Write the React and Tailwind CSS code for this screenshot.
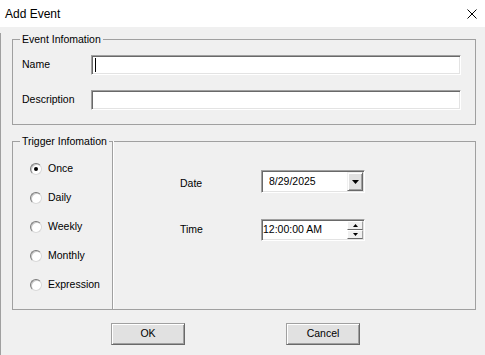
import React from "react";

function Sunken({ className = "", children }) {
  return (
    <div
      className={
        "bg-white border border-t-[#a0a0a0] border-l-[#a0a0a0] border-r-[#ffffff] border-b-[#ffffff] shadow-[inset_1px_1px_0_#696969,inset_-1px_-1px_0_#e3e3e3] " +
        className
      }
    >
      {children}
    </div>
  );
}

function Radio({ checked, label }) {
  return (
    <div className="h-[29px] flex items-center pl-[17px]">
      <div className="w-[12px] h-[12px] rounded-full bg-white border border-t-[#7a7a7a] border-l-[#7a7a7a] border-r-[#d8d8d8] border-b-[#d8d8d8] shadow-[inset_1px_1px_0_#c8c8c8] flex items-center justify-center">
        {checked && <div className="w-[4px] h-[4px] rounded-full bg-black" />}
      </div>
      <span className="ml-[6px]">{label}</span>
    </div>
  );
}

function Button({ children, className = "" }) {
  return (
    <div
      className={
        "w-[74px] h-[22px] bg-[#e1e1e1] border border-t-[#a0a0a0] border-l-[#a0a0a0] border-r-[#696969] border-b-[#696969] shadow-[inset_1px_1px_0_#ffffff,inset_-1px_-1px_0_#a0a0a0] flex items-center justify-center " +
        className
      }
    >
      {children}
    </div>
  );
}

export default function App() {
  return (
    <div className="w-[485px] h-[355px] bg-[#f0f0f0] overflow-hidden text-black font-['Liberation_Sans',Arial,sans-serif] text-[10.5px]">
      {/* Title bar */}
      <div className="h-[27px] bg-white flex items-center justify-between pl-[5px] pr-[8px]">
        <span className="text-[12px]">Add Event</span>
        <svg width="10" height="10" viewBox="0 0 10 10">
          <path d="M0.5 0.5 L9.5 9.5 M9.5 0.5 L0.5 9.5" stroke="#000" strokeWidth="1" />
        </svg>
      </div>

      {/* Body */}
      <div className="h-[328px] border-l border-[#a0a0a0]">
        {/* Event Information */}
        <fieldset className="ml-[11px] mt-[6px] w-[464px] border border-[#a0a0a0] pb-[14px]">
          <legend className="ml-[7px] px-[2px] leading-[12px]">Event Infomation</legend>
          <div className="mt-[10px] h-[20px] flex items-center pl-[9px]">
            <span className="w-[69px]">Name</span>
            <Sunken className="w-[370px] h-[20px] flex items-center">
              <div className="ml-[3px] w-[1px] h-[14px] bg-black" />
            </Sunken>
          </div>
          <div className="mt-[15px] h-[20px] flex items-center pl-[9px]">
            <span className="w-[69px]">Description</span>
            <Sunken className="w-[370px] h-[20px]" />
          </div>
        </fieldset>

        {/* Trigger Information */}
        <fieldset className="ml-[11px] mt-[10px] w-[464px] border border-[#a0a0a0]">
          <legend className="ml-[7px] px-[2px] leading-[12px]">Trigger Infomation</legend>
          <div className="h-[162px] flex items-start">
            <div className="w-[99px] pt-[7px]">
              <Radio checked label="Once" />
              <Radio label="Daily" />
              <Radio label="Weekly" />
              <Radio label="Monthly" />
              <Radio label="Expression" />
            </div>
            <div className="-mt-[6px] h-[168px] flex-1 border-l border-[#a0a0a0] shadow-[inset_1px_0_0_#ffffff] pt-[29px] pl-[67px]">
              <div className="h-[23px] flex items-center">
                <span className="w-[81px] mt-[5px]">Date</span>
                <Sunken className="w-[104px] h-[23px] flex items-center justify-between">
                  <span className="pl-[7px]">8/29/2025</span>
                  <div className="mr-[1px] w-[16px] h-[19px] bg-[#e1e1e1] border border-t-[#f0f0f0] border-l-[#f0f0f0] border-r-[#696969] border-b-[#696969] shadow-[inset_1px_1px_0_#ffffff,inset_-1px_-1px_0_#a0a0a0] flex items-center justify-center">
                    <svg width="7" height="4" viewBox="0 0 7 4">
                      <path d="M0 0 H7 L3.5 4 Z" fill="#000" />
                    </svg>
                  </div>
                </Sunken>
              </div>
              <div className="mt-[26px] h-[22px] flex items-center">
                <span className="w-[81px]">Time</span>
                <Sunken className="w-[104px] h-[22px] flex items-center justify-between">
                  <span className="pl-[1px]">12:00:00 AM</span>
                  <div className="mr-[1px] w-[16px] h-[20px] flex flex-col justify-between py-[1px]">
                    <div className="h-[9px] bg-[#f0f0f0] border border-t-[#ffffff] border-l-[#ffffff] border-r-[#a0a0a0] border-b-[#696969] flex items-center justify-center">
                      <svg width="5" height="3" viewBox="0 0 5 3">
                        <path d="M0 3 H5 L2.5 0 Z" fill="#000" />
                      </svg>
                    </div>
                    <div className="h-[9px] bg-[#f0f0f0] border border-t-[#ffffff] border-l-[#ffffff] border-r-[#a0a0a0] border-b-[#696969] flex items-center justify-center">
                      <svg width="5" height="3" viewBox="0 0 5 3">
                        <path d="M0 0 H5 L2.5 3 Z" fill="#000" />
                      </svg>
                    </div>
                  </div>
                </Sunken>
              </div>
            </div>
          </div>
        </fieldset>

        {/* Buttons */}
        <div className="mt-[13px] flex pl-[110px]">
          <Button>OK</Button>
          <Button className="ml-[101px]">Cancel</Button>
        </div>
      </div>
    </div>
  );
}
